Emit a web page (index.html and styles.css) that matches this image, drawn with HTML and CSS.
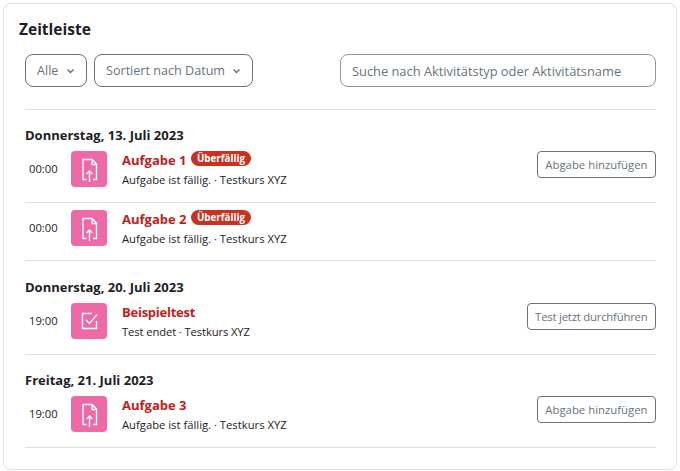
FILE: index.html
```html
<!DOCTYPE html>
<html lang="de">

<head>
    <meta charset="UTF-8">
    <title>Zeitleiste</title>
    <link rel="stylesheet" href="styles.css">
</head>

<body>
    <div class="card">
        <h2 class="card-title">Zeitleiste</h2>

        <div class="filters">
            <button class="select">Alle <svg class="caret" viewBox="0 0 8 6"><path d="M1 1.5l3 3 3-3" /></svg></button>
            <button class="select">Sortiert nach Datum <svg class="caret" viewBox="0 0 8 6"><path d="M1 1.5l3 3 3-3" /></svg></button>
            <input class="search" type="text" placeholder="Suche nach Aktivitätstyp oder Aktivitätsname">
        </div>

        <div class="day">
            <h5 class="day-title">Donnerstag, 13. Juli 2023</h5>
            <div class="event">
                <div class="time">00:00</div>
                <div class="icon">
                    <svg viewBox="0 0 36 36"><path d="M15.5 28.5H12v-20h9l4.5 4.5v15.5H22M21 8.5v5h4.5M18.5 31V20M15.5 23l3-3 3 3" /></svg>
                </div>
                <div class="info">
                    <div class="name"><a>Aufgabe 1</a><span class="badge">Überfällig</span></div>
                    <div class="meta">Aufgabe ist fällig. · Testkurs XYZ</div>
                </div>
                <button class="action">Abgabe hinzufügen</button>
            </div>
            <div class="event">
                <div class="time">00:00</div>
                <div class="icon">
                    <svg viewBox="0 0 36 36"><path d="M15.5 28.5H12v-20h9l4.5 4.5v15.5H22M21 8.5v5h4.5M18.5 31V20M15.5 23l3-3 3 3" /></svg>
                </div>
                <div class="info">
                    <div class="name"><a>Aufgabe 2</a><span class="badge">Überfällig</span></div>
                    <div class="meta">Aufgabe ist fällig. · Testkurs XYZ</div>
                </div>
            </div>
        </div>

        <div class="day">
            <h5 class="day-title">Donnerstag, 20. Juli 2023</h5>
            <div class="event">
                <div class="time">19:00</div>
                <div class="icon">
                    <svg viewBox="0 0 36 36"><path d="M25.5 18v7.5h-14v-15H21M15 17l3.5 3.5L26 11.500" /></svg>
                </div>
                <div class="info tight">
                    <div class="name"><a>Beispieltest</a></div>
                    <div class="meta">Test endet · Testkurs XYZ</div>
                </div>
                <button class="action tight">Test jetzt durchführen</button>
            </div>
        </div>

        <div class="day">
            <h5 class="day-title">Freitag, 21. Juli 2023</h5>
            <div class="event">
                <div class="time">19:00</div>
                <div class="icon">
                    <svg viewBox="0 0 36 36"><path d="M15.5 28.5H12v-20h9l4.5 4.5v15.5H22M21 8.5v5h4.5M18.5 31V20M15.5 23l3-3 3 3" /></svg>
                </div>
                <div class="info">
                    <div class="name"><a>Aufgabe 3</a></div>
                    <div class="meta">Aufgabe ist fällig. · Testkurs XYZ</div>
                </div>
                <button class="action">Abgabe hinzufügen</button>
            </div>
        </div>
    </div>
</body>

</html>
```

FILE: styles.css
```css
* {
    box-sizing: border-box;
}

body {
    margin: 0;
    padding: 3px;
    background: #fff;
    color: #1d2125;
    font-family: "Open Sans", "Noto Sans", sans-serif;
    font-size: 13px;
}

.card {
    height: 467px;
    padding: 14px 20px 0 21px;
    border: 1px solid #dee2e6;
    border-radius: 8px;
}

.card-title {
    margin: 0 0 14px -6px;
    font-size: 15.5px;
    line-height: 22px;
    font-weight: 700;
}

.filters {
    display: flex;
    gap: 7px;
    height: 33px;
}

.select {
    display: flex;
    align-items: center;
    justify-content: space-between;
    gap: 7px;
    padding: 0 11px;
    background: #fff;
    border: 1px solid #6a737b;
    border-radius: 8px;
    color: #6a737b;
    font: inherit;
    font-size: 12.6px;
}

.select:first-child {
    min-width: 62px;
}

.caret {
    width: 9px;
    height: 6px;
    fill: none;
    stroke: #6a737b;
    stroke-width: 1.5;
}

.search {
    width: 316px;
    margin-left: auto;
    padding: 0 11px;
    border: 1px solid #8f959e;
    border-radius: 8px;
    font: inherit;
    font-size: 12.85px;
}

.search::placeholder {
    color: #6a737b;
    opacity: 1;
}

.day {
    padding-top: 16.4px;
}

.filters+.day {
    margin-top: 22px;
    border-top: 1px solid #dee2e6;
}

.day-title {
    margin: 0;
    font-size: 13px;
    line-height: 18px;
    font-weight: 700;
}

.event {
    display: flex;
    align-items: flex-start;
    height: 58.9px;
    padding-top: 7px;
    border-bottom: 1px solid #dee2e6;
}

.event+.event {
    height: 58px;
}

.time {
    width: 46px;
    padding-left: 4px;
    font-size: 11.2px;
    line-height: 36px;
}

.icon {
    flex: none;
    width: 36px;
    height: 36px;
    background: #ee6aa7;
    border-radius: 4px;
}

.icon svg {
    display: block;
    fill: none;
    stroke: #fff;
    stroke-width: 1.4;
}

.info {
    flex: 1;
    margin-left: 15px;
}

.name {
    display: flex;
    align-items: center;
    height: 18px;
    color: #c31d1d;
    font-weight: 700;
}

.info.tight .name {
    letter-spacing: -0.25px;
}

.info.tight .meta {
    letter-spacing: -0.12px;
}

.badge {
    margin-left: 5px;
    margin-top: -3px;
    padding: 1px 5.5px;
    background: #ca3120;
    border-radius: 8px;
    color: #fff;
    font-size: 9.8px;
    line-height: 13px;
}

.meta {
    margin-top: 3px;
    font-size: 11.25px;
    line-height: 16px;
}

.action {
    height: 27px;
    padding: 0 7.5px;
    background: #fff;
    border: 1px solid #6a737b;
    border-radius: 4px;
    color: #6a737b;
    font: inherit;
    font-size: 11.35px;
}

.action.tight {
    letter-spacing: -0.22px;
}
```
